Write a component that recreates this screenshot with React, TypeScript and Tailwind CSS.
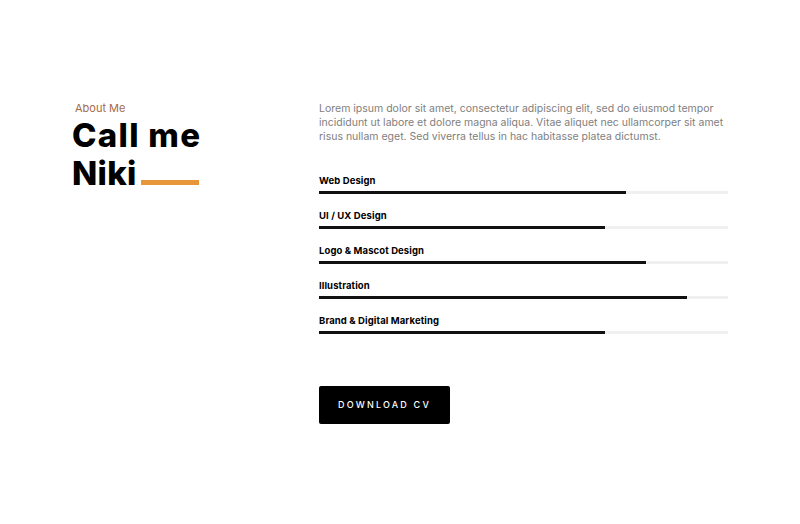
import * as React from "react";

type Skill = { name: string; pct: number };

const SKILLS: Skill[] = [
  { name: "Web Design", pct: 75 },
  { name: "UI / UX Design", pct: 70 },
  { name: "Logo & Mascot Design", pct: 80 },
  { name: "Illustration", pct: 90 },
  { name: "Brand & Digital Marketing", pct: 70 },
];

function SkillBar({ skill }: { skill: Skill }) {
  return (
    <div className="flex flex-col">
      <div className="text-[9.5px] font-bold leading-[14px] tracking-[0.1px] text-black">{skill.name}</div>
      <div className="relative mt-[3px] h-[3px] w-full bg-[#f0f0f0]">
        <div className="absolute left-0 top-0 h-[3px] bg-[#111]" style={{ width: `${skill.pct}%` }} />
      </div>
    </div>
  );
}

export default function App() {
  return (
    <div className="min-h-[524px] w-full bg-white font-['Inter',sans-serif]">
      <div className="flex pt-[100px] pl-[72px]">
        {/* coluna esquerda */}
        <div className="w-[247px] shrink-0">
          <div className="pl-[3px] text-[11px] leading-[16px] text-[#a5694a]">About Me</div>
          <h2 className="mt-[1px] text-[33px] font-extrabold leading-[37px] text-black">
            <span className="tracking-[1.3px]">Call me</span>
            <br />
            <span className="relative top-[1px] tracking-[0.3px]">Niki</span>
            <span className="relative top-[1px] ml-[4px] inline-block h-[5px] w-[58px] bg-[#e8963a]" />
          </h2>
        </div>

        {/* coluna direita */}
        <div className="w-[409px] pt-[2px]">
          <p className="text-[10.5px] leading-[14px] text-[#808080]">
            Lorem ipsum dolor sit amet, consectetur adipiscing elit, sed do eiusmod tempor incididunt ut labore et
            dolore magna aliqua. Vitae aliquet nec ullamcorper sit amet risus nullam eget. Sed viverra tellus in hac
            habitasse platea dictumst.
          </p>

          <div className="mt-[30px] flex flex-col gap-[15px]">
            {SKILLS.map((s) => (
              <SkillBar key={s.name} skill={s} />
            ))}
          </div>

          <button className="mt-[52px] flex h-[38px] w-[131px] items-center justify-center rounded-[2px] bg-black text-[9px] font-medium tracking-[2.2px] text-white">
            DOWNLOAD CV
          </button>
        </div>
      </div>
    </div>
  );
}
